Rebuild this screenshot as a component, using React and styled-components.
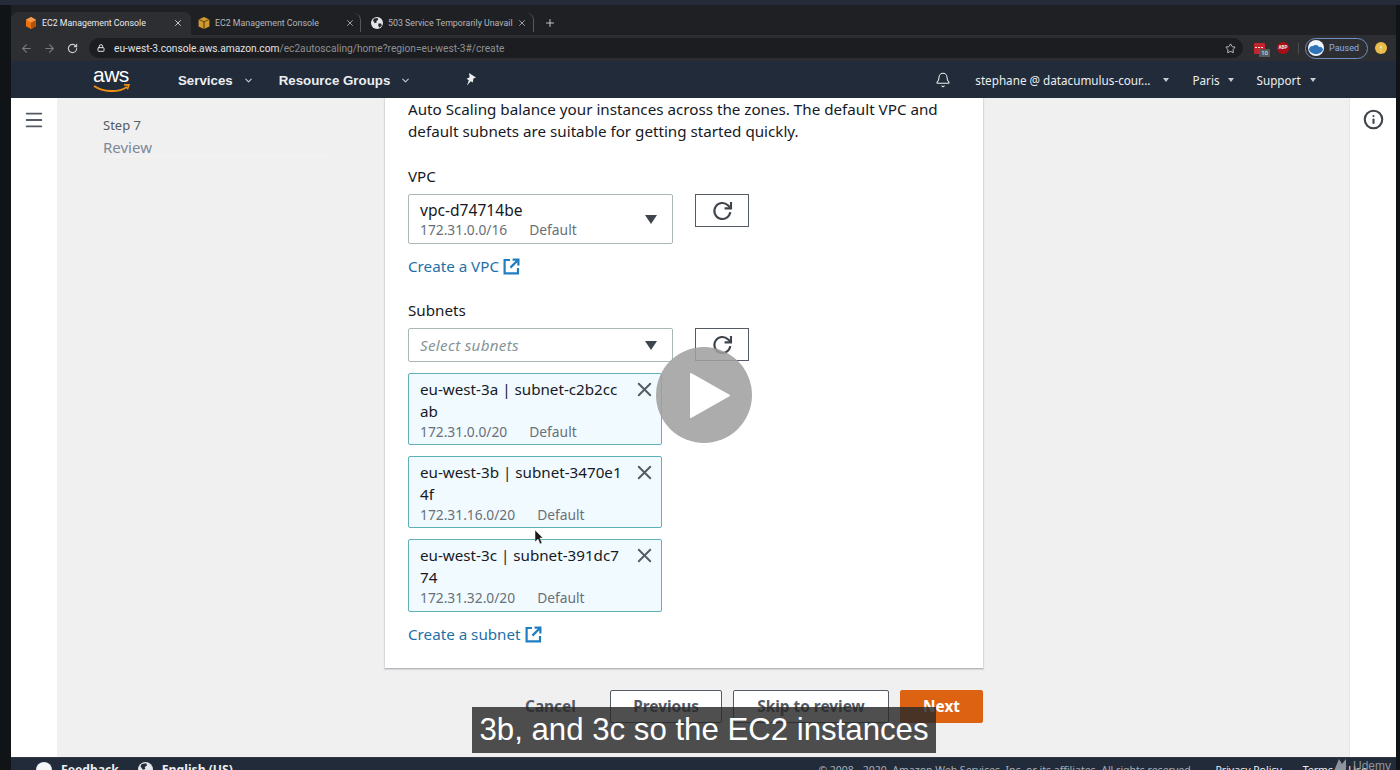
import React from 'react';
import styled, {createGlobalStyle} from 'styled-components';
import {
  ArrowLeft,
  ArrowRight,
  RotateCw,
  Star,
  X,
  Plus,
  Lock,
  Bell,
  ChevronDown,
  Menu,
  Info,
} from 'lucide-react';

const colors = {
  frame: '#101417',
  topStrip: '#252b38',
  tabBar: '#1f2023',
  toolbar: '#2c2e32',
  omnibox: '#1c1d20',
  nav: '#222b3a',
  text: '#16191f',
  muted: '#687078',
  link: '#1f6fa8',
  page: '#f0f0f1',
  orange: '#dd6313',
};

const font = '"Noto Sans", "Open Sans", sans-serif';
const chromeFont = 'Roboto, "Liberation Sans", sans-serif';

const Global = createGlobalStyle`
  html, body {
    margin: 0;
    padding: 0;
    background: ${colors.frame};
  }
  * {
    box-sizing: border-box;
  }
`;

const Screen = styled.div`
  position: relative;
  width: 1400px;
  height: 770px;
  overflow: hidden;
  display: flex;
  flex-direction: column;
  background: ${colors.frame};
  font-family: ${font};
  color: ${colors.text};
`;

const TopStrip = styled.div`
  height: 5px;
  flex: none;
  background: ${colors.topStrip};
`;

const Browser = styled.div`
  flex: 1;
  min-height: 0;
  margin: 0 4px 0 11px;
  display: flex;
  flex-direction: column;
`;

const TabBar = styled.div`
  height: 30px;
  flex: none;
  display: flex;
  align-items: flex-end;
  background: ${colors.tabBar};
  font-family: ${chromeFont};
`;

const Tab = styled.div`
  width: ${p => p.$width}px;
  height: ${p => (p.$active ? 23 : 19)}px;
  margin-bottom: ${p => (p.$active ? 0 : 3)}px;
  padding: 0 ${p => p.$right}px ${p => (p.$active ? 2 : 0)}px ${p => p.$left}px;
  display: flex;
  align-items: center;
  gap: 5px;
  flex: none;
  font-size: 8.8px;
  color: ${p => (p.$active ? '#e8eaed' : '#b4b6b9')};
  background: ${p => (p.$active ? colors.toolbar : 'transparent')};
  border-radius: 7px 7px 0 0;
  border-right: ${p => (p.$divider ? '1px solid #55575b' : 'none')};
`;

const TabTitle = styled.span`
  flex: 1;
  min-width: 0;
  white-space: nowrap;
`;

const NewTab = styled.div`
  margin: 0 0 6px 10px;
  color: #c4c6c9;
  display: flex;
`;

const Toolbar = styled.div`
  height: 26px;
  flex: none;
  display: flex;
  align-items: center;
  background: ${colors.toolbar};
  color: #a2a4a8;
  padding-left: 9px;
`;

const NavButton = styled.span`
  display: flex;
  margin-right: ${p => p.$gap}px;
  color: ${p => p.$color || '#787a7e'};
`;

const Omnibox = styled.div`
  width: 1154px;
  height: 20px;
  flex: none;
  display: flex;
  align-items: center;
  padding: 0 7px 0 8px;
  border-radius: 10px;
  background: ${colors.omnibox};
  font-family: ${chromeFont};
  font-size: 10.2px;
  color: #8e9094;
`;

const Host = styled.span`
  color: #e0e2e5;
`;

const Url = styled.span`
  flex: 1;
  margin-left: 9px;
  white-space: nowrap;
`;

const ExtensionArea = styled.div`
  flex: 1;
  display: flex;
  align-items: center;
  padding-left: 11px;
  gap: 11px;
`;

const RedExt = styled.span`
  position: relative;
  width: 11px;
  height: 11px;
  display: block;
  border-radius: 1px;
  background: #c0272d;
`;

const ExtDots = styled.span`
  position: absolute;
  left: 1px;
  top: 4px;
  width: 8px;
  height: 1.5px;
  background: repeating-linear-gradient(90deg, #f4dcdc 0 2px, transparent 2px 3px);
`;

const ExtBadge = styled.span`
  position: absolute;
  left: 5px;
  top: 6px;
  width: 11px;
  height: 8px;
  background: #55585c;
  color: #eee;
  font: 6px/8px ${chromeFont};
  text-align: center;
`;

const AbpBadge = styled.span`
  width: 12px;
  height: 12px;
  border-radius: 50%;
  margin-left: 1px;
  background: #a80f15;
  color: #f0e6e6;
  font: bold 4.6px/12px ${chromeFont};
  text-align: center;
`;

const ExtDivider = styled.span`
  width: 1px;
  height: 11px;
  margin-left: -2px;
  background: #4a4c50;
`;

const Profile = styled.div`
  width: 63px;
  height: 21px;
  margin-left: -5px;
  display: flex;
  align-items: center;
  gap: 5px;
  padding-left: 2px;
  border: 1px solid #6f8fc0;
  border-radius: 11px;
  color: #8fb0e4;
  font: 9px ${chromeFont};
`;

const Avatar = styled.svg`
  width: 16px;
  height: 16px;
  flex: none;
`;

const UpdateDot = styled.span`
  width: 12px;
  height: 12px;
  margin-left: -4px;
  border-radius: 50%;
  background: #e9bd45;
  color: #fff;
  font: bold 9px/12px ${chromeFont};
  text-align: center;
`;

const ConsoleNav = styled.nav`
  height: 37px;
  flex: none;
  display: flex;
  align-items: center;
  background: ${colors.nav};
  color: #eceef0;
  font-family: "Liberation Sans", Arial, sans-serif;
`;

const Logo = styled.div`
  width: 37px;
  margin: 0 48px 0 82px;
  position: relative;
  height: 28px;
  flex: none;
`;

const LogoText = styled.span`
  display: block;
  font: 21px/21px "Liberation Sans", Arial, sans-serif;
  letter-spacing: -0.5px;
  color: #fff;
  margin-top: -2px;
`;

const Smile = styled.svg`
  position: absolute;
  left: 0;
  top: 18px;
  width: 37px;
  height: 10px;
`;

const NavMenu = styled.span`
  display: flex;
  align-items: center;
  gap: ${p => p.$gap || 8}px;
  margin-right: ${p => p.$right}px;
  padding-top: 1px;
  font-size: ${p => (p.$bold ? 13.3 : 11.7)}px;
  font-weight: ${p => (p.$bold ? 700 : 400)};
  font-family: ${p => (p.$bold ? '"Liberation Sans", Arial, sans-serif' : font)};
  white-space: nowrap;
`;

const Caret = styled.span`
  width: 0;
  height: 0;
  border-left: 3.5px solid transparent;
  border-right: 3.5px solid transparent;
  border-top: 4px solid #c8ccd0;
`;

const NavIcon = styled.span`
  display: flex;
  margin-right: ${p => p.$right}px;
  margin-left: ${p => p.$left || 0}px;
`;

const Body = styled.div`
  flex: 1;
  min-height: 0;
  display: flex;
  overflow: hidden;
`;

const LeftRail = styled.div`
  width: 46px;
  flex: none;
  background: #fff;
  padding: 11px 0 0 12px;
  color: #545b64;
`;

const RightRail = styled.div`
  width: 47px;
  flex: none;
  background: #fff;
  border-left: 1px solid #e6e7e8;
  padding: 11px 0 0 13px;
  color: #3f454c;
`;

const Page = styled.main`
  flex: 1;
  min-width: 0;
  display: flex;
  background: ${colors.page};
`;

const Steps = styled.aside`
  width: 328px;
  flex: none;
  padding: 17px 0 0 46px;
`;

const StepLabel = styled.div`
  font-size: 13px;
  line-height: 20px;
  color: #545b64;
`;

const StepName = styled.div`
  width: 230px;
  height: 22px;
  font-size: 15px;
  line-height: 24px;
  color: #7d8998;
  border-bottom: 1px solid #f4f4f5;
`;

const Wizard = styled.div`
  width: 598px;
  flex: none;
`;

const Card = styled.section`
  height: 571px;
  padding: 0 23px;
  background: #fff;
  border-bottom: 1px solid #b4b6b8;
  box-shadow: 0 0 1px 1px rgba(0, 22, 43, 0.1);
  font-size: 15.2px;
  line-height: 22px;
`;

const Intro = styled.p`
  margin: 0 0 23px;
  white-space: nowrap;
`;

const Label = styled.div`
  margin-bottom: ${p => p.$below}px;
`;

const FieldRow = styled.div`
  display: flex;
  gap: 22px;
  align-items: flex-start;
`;

const Select = styled.div`
  width: 265px;
  height: ${p => p.$height}px;
  padding: 0 12px 0 11px;
  display: flex;
  align-items: center;
  justify-content: space-between;
  background: #fff;
  border: 1px solid #aab7b8;
  border-radius: 2px;
`;

const Placeholder = styled.span`
  font-style: italic;
  letter-spacing: 0.3px;
  color: #879596;
`;

const OptionMeta = styled.div`
  display: flex;
  gap: 22px;
  margin-top: 1px;
  font-size: 13.8px;
  line-height: 18px;
  color: ${colors.muted};
`;

const SelectValue = styled.div`
  font-size: 15.6px;
  line-height: 20px;
`;

const Arrow = styled.span`
  width: 0;
  height: 0;
  margin-right: 3px;
  border-left: 6.5px solid transparent;
  border-right: 6.5px solid transparent;
  border-top: 9px solid #3f454c;
`;

const RefreshButton = styled.button`
  width: 54px;
  height: 33px;
  padding: 0;
  display: flex;
  align-items: center;
  justify-content: center;
  background: #fff;
  border: 1px solid #545b64;
  color: #3f454c;
`;

const CreateLink = styled.a`
  display: flex;
  align-items: center;
  gap: 4px;
  margin: ${p => p.$top}px 0 ${p => p.$bottom}px;
  color: ${colors.link};
`;

const Tokens = styled.div`
  display: flex;
  flex-direction: column;
  gap: 11px;
  margin-top: 11px;
`;

const Token = styled.div`
  position: relative;
  width: 254px;
  height: ${p => p.$height}px;
  padding: 4px 34px 0 11px;
  background: #f1faff;
  border: 1px solid #5fb0b7;
  border-radius: 2px;
`;

const TokenName = styled.div`
  white-space: pre-line;
`;

const TokenClose = styled.span`
  position: absolute;
  top: 4px;
  right: 5px;
  display: flex;
  color: #545b64;
`;

const Actions = styled.div`
  display: flex;
  align-items: center;
  gap: 11px;
  margin-top: 21px;
  font-size: 15.4px;
  font-weight: 700;
`;

const CancelLink = styled.span`
  width: 50px;
  margin: 0 24px 0 auto;
  color: #545b64;
  white-space: nowrap;
  text-align: center;
`;

const Button = styled.button`
  width: ${p => p.$width}px;
  height: 33px;
  padding: 0;
  font: inherit;
  color: ${p => (p.$primary ? '#fff' : '#545b64')};
  background: ${p => (p.$primary ? colors.orange : '#fff')};
  border: 1px solid ${p => (p.$primary ? colors.orange : '#545b64')};
  border-radius: 2px;
`;

const Footer = styled.footer`
  height: 13px;
  flex: none;
  overflow: hidden;
  display: flex;
  align-items: flex-start;
  padding: 4px 29px 0 25px;
  background: ${colors.nav};
  border-top: 1px solid #2f3847;
  color: #eceef0;
  font-size: 12.2px;
  line-height: 16px;
  white-space: nowrap;
`;

const FeedbackDot = styled.span`
  width: 16px;
  height: 16px;
  margin-right: 9px;
  border-radius: 50%;
  background: #f4f5f6;
  flex: none;
`;

const FooterStart = styled.span`
  font-weight: 700;
  margin-right: ${p => p.$right}px;
`;

const FooterGlobe = styled.span`
  display: flex;
  margin-right: 9px;
`;

const Copyright = styled.span`
  margin-left: auto;
  color: #a9afb8;
  font-size: 10.5px;
  margin-right: 22px;
`;

const FooterLink = styled.span`
  margin-right: ${p => p.$right}px;
  font-size: 10.5px;
`;

const Caption = styled.div`
  position: absolute;
  left: 472px;
  top: 707px;
  width: 464px;
  height: 46px;
  background: rgba(40, 40, 40, 0.82);
  color: #fff;
  font: 31.2px/45px "Liberation Sans", Arial, sans-serif;
  text-align: center;
  white-space: nowrap;
`;

const PlayOverlay = styled.div`
  position: absolute;
  left: 656px;
  top: 347px;
  width: 96px;
  height: 96px;
  border-radius: 50%;
  background: rgba(158, 158, 158, 0.86);
`;

const PlayIcon = styled.svg`
  position: absolute;
  left: 31px;
  top: 24px;
  width: 44px;
  height: 48px;
`;

const Pointer = styled.svg`
  position: absolute;
  left: 535px;
  top: 530px;
  width: 9px;
  height: 14px;
`;

const Watermark = styled.div`
  position: absolute;
  right: 9px;
  top: 759px;
  display: flex;
  gap: 3px;
  align-items: flex-start;
  color: #8f959c;
  font: 12px/14px "Liberation Sans", Arial, sans-serif;
`;

const Cube = ({color = '#ec7211'}) => (
  <svg width="12" height="12" viewBox="0 0 12 12">
    <path d="M6 0l5 2.8v6.4L6 12 1 9.2V2.8z" fill={color} />
    <path d="M6 5.6L11 2.8v6.4L6 12z" fill="#b5520c" />
    <path d="M6 0l5 2.8-5 2.8-5-2.8z" fill="#f69a4a" />
  </svg>
);

const Box = () => (
  <svg width="12" height="12" viewBox="0 0 12 12">
    <path d="M6 0l5.4 2.4v7L6 12 .6 9.4v-7z" fill="#d29a2c" />
    <path d="M6 4.6v7.4" stroke="#4a3510" strokeWidth="1" />
    <path d="M.6 2.4L6 4.8l5.4-2.4" stroke="#4a3510" strokeWidth=".8" fill="none" />
  </svg>
);

const SolidGlobe = ({size, land}) => (
  <svg width={size} height={size} viewBox="0 0 12 12">
    <circle cx="6" cy="6" r="6" fill="#e4e6e9" />
    <path d="M3 1.6l3.6-.6.6 1.8-1.8 1.2.4 1.6-2 .6L2 3.4zM7.4 6.4l2.8.2.6 2-2.4 2.2-1.2-2.2z" fill={land} />
  </svg>
);

const Refresh = () => (
  <svg width="21" height="21" viewBox="0 0 21 21" fill="none" stroke="currentColor" strokeWidth="2.1">
    <path d="M18.3 12.2a8 8 0 1 1-2.4-7l2.6 2.6" />
    <path d="M19 2v6.4h-6.4" />
  </svg>
);

const OpenIcon = () => (
  <svg width="17" height="17" viewBox="0 0 17 17" fill="none" stroke="#1f7ec2" strokeWidth="2.2">
    <path d="M7 2H1.6v13.4H15V10" />
    <path d="M9.6 1.6h5.8v5.8M15 2L7.4 9.6" />
  </svg>
);

const tokens = [
  {name: 'eu-west-3a | subnet-c2b2cc\nab', cidr: '172.31.0.0/20', height: 72},
  {name: 'eu-west-3b | subnet-3470e1\n4f', cidr: '172.31.16.0/20', height: 72},
  {name: 'eu-west-3c | subnet-391dc7\n74', cidr: '172.31.32.0/20', height: 73},
];

const App = () => {
  return (
    <Screen>
      <Global />
      <TopStrip />
      <Browser>
        <TabBar>
          <Tab $active $width={180} $left={14} $right={8}>
            <Cube />
            <TabTitle>EC2 Management Console</TabTitle>
            <X size={10} strokeWidth={2} />
          </Tab>
          <Tab $width={170} $left={7} $right={5} $divider>
            <Box />
            <TabTitle>EC2 Management Console</TabTitle>
            <X size={10} strokeWidth={2} />
          </Tab>
          <Tab $width={173} $left={10} $right={6} $divider>
            <SolidGlobe size={12} land="#26282b" />
            <TabTitle>503 Service Temporarily Unavail</TabTitle>
            <X size={10} strokeWidth={2} />
          </Tab>
          <NewTab>
            <Plus size={12} strokeWidth={2} />
          </NewTab>
        </TabBar>
        <Toolbar>
          <NavButton $gap={10}>
            <ArrowLeft size={13} />
          </NavButton>
          <NavButton $gap={11}>
            <ArrowRight size={13} />
          </NavButton>
          <NavButton $gap={11} $color="#c8cacd">
            <RotateCw size={11} strokeWidth={2.6} />
          </NavButton>
          <Omnibox>
            <Lock size={8} strokeWidth={3} color="#e0e2e5" />
            <Url>
              <Host>eu-west-3.console.aws.amazon.com</Host>/ec2autoscaling/home?region=eu-west-3#/create
            </Url>
            <Star size={11} color="#c8cacd" />
          </Omnibox>
          <ExtensionArea>
            <RedExt>
              <ExtDots />
              <ExtBadge>10</ExtBadge>
            </RedExt>
            <AbpBadge>ABP</AbpBadge>
            <ExtDivider />
            <Profile>
              <Avatar viewBox="0 0 16 16">
                <circle cx="8" cy="8" r="8" fill="#f2f6fb" />
                <path d="M1 10a4 4 0 0 1 4-4 4 4 0 0 1 6 1 3 3 0 0 1 4 3 8 8 0 0 1-14 0z" fill="#2f74b8" />
              </Avatar>
              Paused
            </Profile>
            <UpdateDot>↑</UpdateDot>
          </ExtensionArea>
        </Toolbar>
        <ConsoleNav>
          <Logo>
            <LogoText>aws</LogoText>
            <Smile viewBox="0 0 37 10">
              <path d="M1 2c9 6 24 7 33 1" fill="none" stroke="#f29111" strokeWidth="2" />
              <path d="M31 1l5-.4-1.6 4.6" fill="none" stroke="#f29111" strokeWidth="1.6" />
            </Smile>
          </Logo>
          <NavMenu $bold $gap={10} $right={25}>
            Services <ChevronDown size={11} strokeWidth={2.4} color="#c8ccd0" />
          </NavMenu>
          <NavMenu $bold $gap={10} $right={54}>
            Resource Groups <ChevronDown size={11} strokeWidth={2.4} color="#c8ccd0" />
          </NavMenu>
          <NavIcon $right={458}>
            <svg width="12" height="14" viewBox="0 0 12 14">
              <path d="M4 0l7 4.4-2.6 1.2-.6 3.8-2-1.2L2 12.6l1.8-5.4L1.6 5.8l3-1.6z" fill="#eceef0" />
            </svg>
          </NavIcon>
          <NavIcon $right={24}>
            <Bell size={16} strokeWidth={1.6} />
          </NavIcon>
          <NavMenu $right={23} $gap={13}>
            stephane @ datacumulus-cour... <Caret />
          </NavMenu>
          <NavMenu $right={23} $gap={8}>
            Paris <Caret />
          </NavMenu>
          <NavMenu $gap={9}>
            Support <Caret />
          </NavMenu>
        </ConsoleNav>
        <Body>
          <LeftRail>
            <Menu size={22} strokeWidth={2} />
          </LeftRail>
          <Page>
            <Steps>
              <StepLabel>Step 7</StepLabel>
              <StepName>Review</StepName>
            </Steps>
            <Wizard>
              <Card>
                <Intro>
                  Auto Scaling balance your instances across the zones. The default VPC and
                  <br />
                  default subnets are suitable for getting started quickly.
                </Intro>
                <Label $below={7}>VPC</Label>
                <FieldRow>
                  <Select $height={50}>
                    <div>
                      <SelectValue>vpc-d74714be</SelectValue>
                      <OptionMeta>
                        <span>172.31.0.0/16</span>
                        <span>Default</span>
                      </OptionMeta>
                    </div>
                    <Arrow />
                  </Select>
                  <RefreshButton>
                    <Refresh />
                  </RefreshButton>
                </FieldRow>
                <CreateLink $top={11} $bottom={22}>
                  Create a VPC <OpenIcon />
                </CreateLink>
                <Label $below={7}>Subnets</Label>
                <FieldRow>
                  <Select $height={34}>
                    <Placeholder>Select subnets</Placeholder>
                    <Arrow />
                  </Select>
                  <RefreshButton>
                    <Refresh />
                  </RefreshButton>
                </FieldRow>
                <Tokens>
                  {tokens.map(token => (
                    <Token key={token.cidr} $height={token.height}>
                      <TokenName>{token.name}</TokenName>
                      <OptionMeta>
                        <span>{token.cidr}</span>
                        <span>Default</span>
                      </OptionMeta>
                      <TokenClose>
                        <X size={23} strokeWidth={2} />
                      </TokenClose>
                    </Token>
                  ))}
                </Tokens>
                <CreateLink $top={11} $bottom={0}>
                  Create a subnet <OpenIcon />
                </CreateLink>
              </Card>
              <Actions>
                <CancelLink>Cancel</CancelLink>
                <Button $width={112}>Previous</Button>
                <Button $width={156}>Skip to review</Button>
                <Button $width={83} $primary>
                  Next
                </Button>
              </Actions>
            </Wizard>
          </Page>
          <RightRail>
            <Info size={21} strokeWidth={2.4} />
          </RightRail>
        </Body>
        <Footer>
          <FeedbackDot />
          <FooterStart $right={19}>Feedback</FooterStart>
          <FooterGlobe>
            <SolidGlobe size={15} land={colors.nav} />
          </FooterGlobe>
          <FooterStart $right={0}>English (US)</FooterStart>
          <Copyright>© 2008 - 2020, Amazon Web Services, Inc. or its affiliates. All rights reserved.</Copyright>
          <FooterLink $right={21}>Privacy Policy</FooterLink>
          <FooterLink $right={0}>Terms of Use</FooterLink>
        </Footer>
      </Browser>
      <PlayOverlay>
        <PlayIcon viewBox="0 0 44 48">
          <path d="M4 3l38 21.5L4 46z" fill="#fff" stroke="#fff" strokeWidth="2" strokeLinejoin="round" />
        </PlayIcon>
      </PlayOverlay>
      <Pointer viewBox="0 0 9 14">
        <path d="M0 0l8 8H5l2 5-2 1-2-5-3 3z" fill="#1c1c1c" stroke="#fff" strokeWidth=".5" />
      </Pointer>
      <Caption>3b, and 3c so the EC2 instances</Caption>
      <Watermark>
        <svg width="16" height="12" viewBox="0 0 16 12">
          <path d="M0 12L5 0l3 5 4-5v12z" fill="#8f959c" />
        </svg>
        Udemy
      </Watermark>
    </Screen>
  );
};

export default App;
